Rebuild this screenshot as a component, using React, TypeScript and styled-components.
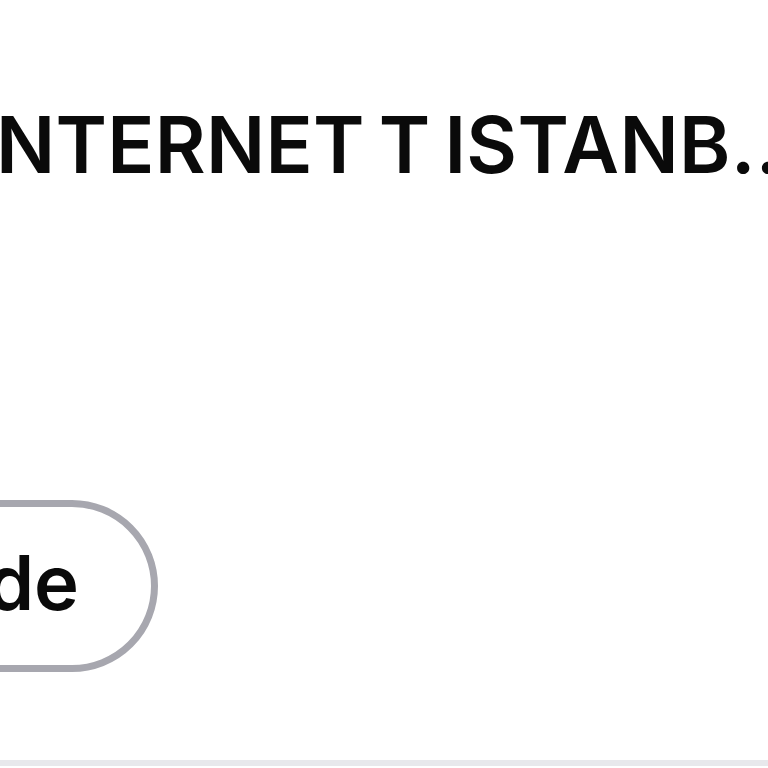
import * as React from "react"
import styled, { createGlobalStyle } from "styled-components"

const GlobalStyle = createGlobalStyle`
  html, body {
    margin: 0;
    padding: 0;
    background: #ffffff;
  }
  body {
    font-family: Inter, "Noto Sans", Arial, sans-serif;
  }
`

const App = () => {
  return (
    <>
      <GlobalStyle />
      <Screen>
        <Header>
          <Title>INTERNET T ISTANBUL</Title>
        </Header>
        <Actions>
          <PillButton width={300}>Guide</PillButton>
        </Actions>
        <Divider />
      </Screen>
    </>
  )
}

export default App

const Screen = styled.div`
  width: 768px;
  height: 768px;
  overflow: hidden;
  display: flex;
  flex-direction: column;
  background: #ffffff;
`

const Header = styled.div`
  height: 100px;
  padding-top: 106px;
  margin-left: -26px;
`

const Title = styled.h1`
  margin: 0;
  width: 858px;
  font-size: 78px;
  line-height: 1;
  font-weight: 600;
  letter-spacing: 0.3px;
  word-spacing: -6px;
  color: #0a0a0a;
  white-space: nowrap;
  overflow: hidden;
  text-overflow: ellipsis;
`

const Actions = styled.div`
  display: flex;
  margin-top: 294px;
  height: 172px;
`

const PillButton = styled.button<{ width: number }>`
  box-sizing: border-box;
  width: ${p => p.width}px;
  height: 172px;
  margin-left: ${p => 158 - p.width}px;
  display: flex;
  align-items: center;
  justify-content: flex-end;
  padding: 0 72px 8px 0;
  border: 7px solid #a7a7af;
  border-radius: 86px;
  background: #ffffff;
  font-family: Inter, "Noto Sans", Arial, sans-serif;
  font-size: 76px;
  font-weight: 600;
  color: #0a0a0a;
`

const Divider = styled.div`
  margin-top: auto;
  margin-bottom: 2px;
  height: 6px;
  background: #e8e8ec;
`
